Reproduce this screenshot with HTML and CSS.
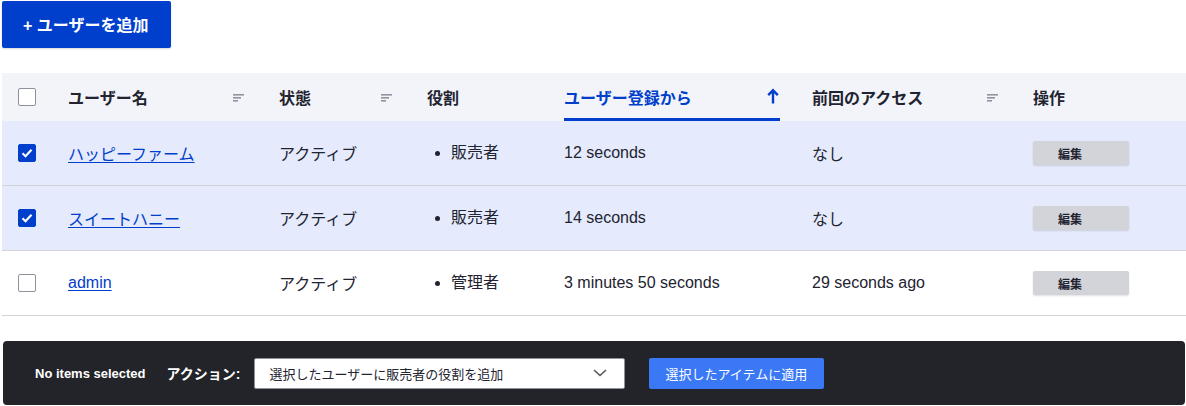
FILE: index.html
```html
<!DOCTYPE html>
<html lang="ja">
<head>
<meta charset="utf-8">
<title>ユーザー</title>
<link rel="stylesheet" href="styles.css">
</head>
<body>
<div class="page">
  <a class="add-btn" href="#">+ ユーザーを追加</a>

  <table class="users">
    <colgroup>
      <col class="c-check"><col class="c-name"><col class="c-status"><col class="c-roles"><col class="c-member"><col class="c-access"><col class="c-ops">
    </colgroup>
    <thead>
      <tr>
        <th class="cell-check"><span class="cb"></span></th>
        <th><div class="th-in"><span>ユーザー名</span><svg class="sort" width="12" height="8" viewBox="0 0 12 8"><rect x="0" y="0" width="11" height="1.6" fill="#8f94a3"/><rect x="0" y="3" width="8" height="1.6" fill="#8f94a3"/><rect x="0" y="6" width="5" height="1.6" fill="#8f94a3"/></svg></div></th>
        <th><div class="th-in"><span>状態</span><svg class="sort" width="12" height="8" viewBox="0 0 12 8"><rect x="0" y="0" width="11" height="1.6" fill="#8f94a3"/><rect x="0" y="3" width="8" height="1.6" fill="#8f94a3"/><rect x="0" y="6" width="5" height="1.6" fill="#8f94a3"/></svg></div></th>
        <th><div class="th-in"><span>役割</span></div></th>
        <th><div class="th-in active"><span>ユーザー登録から</span><svg class="arrow" width="12" height="16" viewBox="0 0 12 16"><path d="M6 15.5V2.5M1.2 7.2L6 2.3l4.8 4.9" fill="none" stroke="#003ecc" stroke-width="2.4"/></svg></div></th>
        <th><div class="th-in"><span>前回のアクセス</span><svg class="sort" width="12" height="8" viewBox="0 0 12 8"><rect x="0" y="0" width="11" height="1.6" fill="#8f94a3"/><rect x="0" y="3" width="8" height="1.6" fill="#8f94a3"/><rect x="0" y="6" width="5" height="1.6" fill="#8f94a3"/></svg></div></th>
        <th><div class="th-in"><span>操作</span></div></th>
      </tr>
    </thead>
    <tbody>
      <tr class="selected">
        <td class="cell-check"><span class="cb checked"><svg width="12" height="10" viewBox="0 0 12 10"><path d="M1.5 5.2l3 3 6-6.4" fill="none" stroke="#fff" stroke-width="2.2"/></svg></span></td>
        <td><a class="link" href="#">ハッピーファーム</a></td>
        <td>アクティブ</td>
        <td><ul class="roles"><li>販売者</li></ul></td>
        <td>12 seconds</td>
        <td>なし</td>
        <td><a class="edit" href="#">編集</a></td>
      </tr>
      <tr class="selected">
        <td class="cell-check"><span class="cb checked"><svg width="12" height="10" viewBox="0 0 12 10"><path d="M1.5 5.2l3 3 6-6.4" fill="none" stroke="#fff" stroke-width="2.2"/></svg></span></td>
        <td><a class="link" href="#">スイートハニー</a></td>
        <td>アクティブ</td>
        <td><ul class="roles"><li>販売者</li></ul></td>
        <td>14 seconds</td>
        <td>なし</td>
        <td><a class="edit" href="#">編集</a></td>
      </tr>
      <tr>
        <td class="cell-check"><span class="cb"></span></td>
        <td><a class="link" href="#">admin</a></td>
        <td>アクティブ</td>
        <td><ul class="roles"><li>管理者</li></ul></td>
        <td>3 minutes 50 seconds</td>
        <td>29 seconds ago</td>
        <td><a class="edit" href="#">編集</a></td>
      </tr>
    </tbody>
  </table>

  <div class="bulk">
    <span class="bulk-count">No items selected</span>
    <span class="bulk-label">アクション:</span>
    <div class="select">
      <span>選択したユーザーに販売者の役割を追加</span>
      <svg width="14" height="8" viewBox="0 0 14 8"><path d="M1 1l6 5.5L13 1" fill="none" stroke="#55565b" stroke-width="1.6"/></svg>
    </div>
    <a class="apply" href="#">選択したアイテムに適用</a>
  </div>
</div>
</body>
</html>
```

FILE: styles.css
```css
html, body {
  margin: 0;
  padding: 0;
  background: #fff;
}
body {
  font-family: "Liberation Sans", "Noto Sans CJK JP", sans-serif;
  font-size: 16px;
  color: #222330;
}
.page {
  padding: 1px 0 0 2px;
  width: 1184px;
}
.add-btn {
  display: inline-flex;
  align-items: center;
  height: 47px;
  padding: 0 23px 0 21px;
  padding-bottom: 2px;
  box-sizing: border-box;
  background: #003ecc;
  color: #fff;
  font-weight: bold;
  font-size: 16px;
  text-decoration: none;
  border-radius: 2px;
  box-shadow: 0 1px 2px rgba(0, 0, 0, 0.15);
}
.users {
  margin-top: 25px;
  width: 1184px;
  table-layout: fixed;
  border-collapse: collapse;
}
.c-check { width: 50px; }
.c-name { width: 211px; }
.c-status { width: 148px; }
.c-roles { width: 137px; }
.c-member { width: 248px; }
.c-access { width: 221px; }
.c-ops { width: 169px; }

.users thead tr {
  background: #f3f4f9;
}
.users th {
  padding: 0 16px;
  height: 48px;
  text-align: left;
  font-weight: bold;
  vertical-align: middle;
}
.users th.cell-check,
.users td.cell-check {
  padding: 0 0 0 16px;
}
.th-in {
  display: flex;
  align-items: center;
  justify-content: space-between;
  height: 48px;
  padding-bottom: 1px;
  box-sizing: border-box;
}
.th-in.active {
  color: #003ecc;
  border-bottom: 3px solid #003ecc;
  padding-top: 2px;
  padding-bottom: 0;
}
.sort {
  margin-right: 2px;
  margin-top: 2px;
}
.arrow {
  margin-right: 1px;
  margin-top: -2px;
}
.users tbody tr {
  border-bottom: 1px solid #d3d4d9;
}
.users tbody tr.selected {
  background: #e5ebfc;
}
.users td {
  height: 64px;
  padding: 0 16px;
  vertical-align: middle;
}
.cb {
  display: flex;
  align-items: center;
  justify-content: center;
  width: 18px;
  height: 18px;
  box-sizing: border-box;
  border: 1px solid #8e929c;
  border-radius: 2px;
  background: #fff;
}
.cb.checked {
  background: #003ecc;
  border-color: #003ecc;
}
.link {
  color: #003ecc;
  text-decoration: underline;
  text-underline-offset: 2px;
}
.roles {
  margin: 0 0 4px 0;
  padding-left: 24px;
  list-style: disc;
}
.edit {
  display: flex;
  align-items: center;
  width: 96px;
  height: 24px;
  box-sizing: border-box;
  padding-left: 25px;
  background: #d3d4d9;
  color: #222330;
  font-size: 12px;
  font-weight: bold;
  text-decoration: none;
  border-radius: 2px;
  box-shadow: 0 1px 2px rgba(0, 0, 0, 0.12);
}
.bulk {
  margin: 25px 0 0 1px;
  width: 1182px;
  height: 64px;
  box-sizing: border-box;
  display: flex;
  align-items: center;
  padding: 0 32px;
  background: #232429;
  border-radius: 4px;
  color: #fff;
}
.bulk-count {
  font-size: 13px;
  font-weight: bold;
  margin-right: 21px;
}
.bulk-label {
  font-size: 14px;
  font-weight: 600;
  margin-right: 13px;
}
.select {
  display: flex;
  align-items: center;
  justify-content: space-between;
  width: 371px;
  height: 31px;
  box-sizing: border-box;
  padding: 0 17px 0 15px;
  background: #fff;
  border: 1px solid #8e929c;
  border-radius: 2px;
  color: #222330;
  font-size: 13px;
  margin-right: 24px;
}
.apply {
  display: flex;
  align-items: center;
  height: 31px;
  padding: 0 17px;
  background: #3a78f6;
  color: #fff;
  font-size: 13px;
  text-decoration: none;
  border-radius: 2px;
}
```
